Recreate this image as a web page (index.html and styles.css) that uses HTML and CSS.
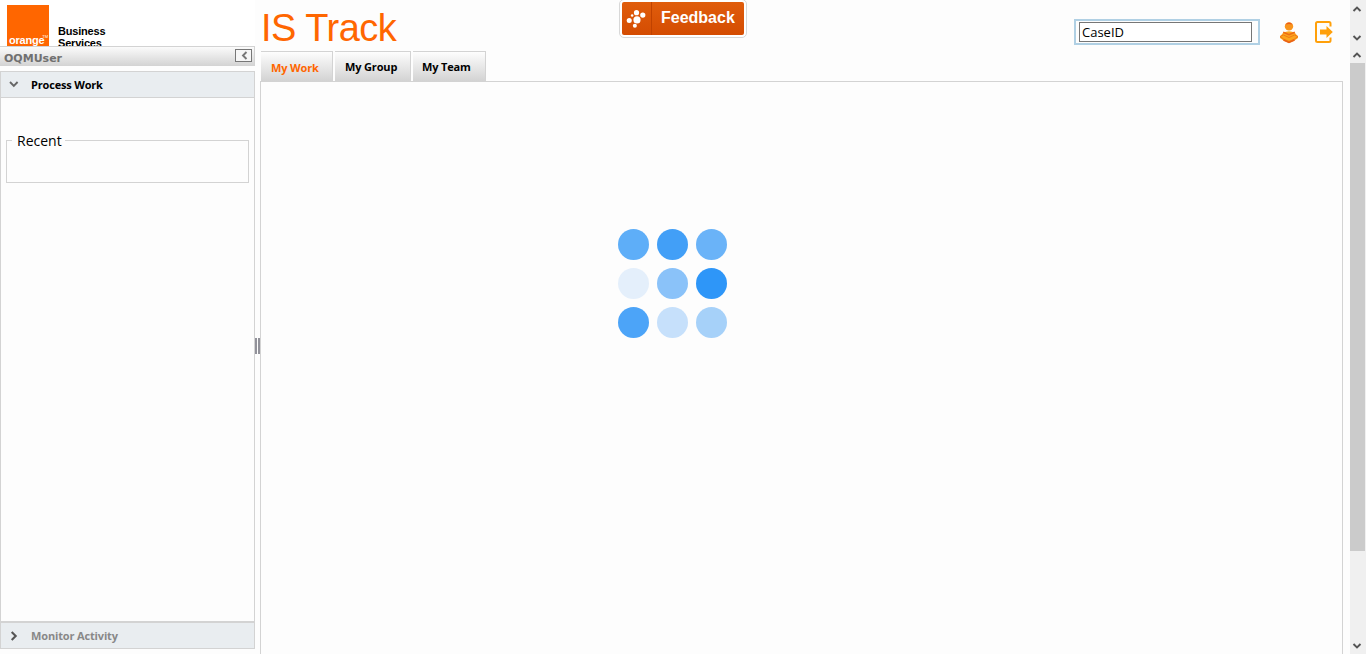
FILE: index.html
```html
<!DOCTYPE html>
<html lang="en">
<head>
<meta charset="utf-8">
<title>IS Track</title>
<link rel="stylesheet" href="styles.css">
</head>
<body>
<div class="app">
  <aside class="sidebar">
    <div class="brand">
      <div class="logo"><span class="logo-text">orange</span><span class="logo-tm">TM</span></div>
      <div class="brand-name">Business<br>Services</div>
    </div>
    <div class="user-bar">
      <span class="user-name">OQMUser</span>
      <button class="collapse" aria-label="Collapse"><svg width="15" height="11" viewBox="0 0 15 11"><path d="M10.500 2L7 5.500L10.500 9" fill="none" stroke="#777" stroke-width="1.900"/></svg></button>
    </div>
    <div class="accordion">
      <div class="acc-head">
        <svg class="chevron" width="10" height="10" viewBox="0 0 10 10"><path d="M1 2L4.800 5.800L8.600 2" fill="none" stroke="#666" stroke-width="1.900"/></svg>
        <span>Process Work</span>
      </div>
      <div class="acc-body">
        <fieldset class="recent"><legend>Recent</legend></fieldset>
      </div>
      <div class="acc-head acc-closed">
        <svg class="chevron" width="10" height="10" viewBox="0 0 10 10"><path d="M2.700 1L6.700 5L2.700 9" fill="none" stroke="#555" stroke-width="2.100"/></svg>
        <span>Monitor Activity</span>
      </div>
    </div>
  </aside>
  <div class="splitter"><i></i><i></i></div>
  <main class="main">
    <header class="header">
      <h1 class="title">IS Track</h1>
      <div class="search"><input class="search-input" type="text" value="CaseID"></div>
      <svg class="icon-user" width="20" height="22" viewBox="0 0 20 22">
        <circle cx="10" cy="4.400" r="4.200" fill="#f8951c"/>
        <path d="M6.300 2.600Q10 -1.500 13.700 2.600Q10 1.300 6.300 2.600Z" fill="#ea5a1c"/>
        <path d="M4 11Q10 7.500 16 11L19 14.500V16L15.500 18.500L10 21L4.500 18.500L1 16V14.500Z" fill="#fba51c"/>
        <path d="M4.200 10.200L10 12.800L15.800 10.200" fill="none" stroke="#ee6a16" stroke-width="1.500"/>
        <path d="M1 14.500L4.500 13L10 15.500L15.500 13L19 14.500L15.500 17L10 19.500L4.500 17Z" fill="#fba51c" stroke="#f07a18" stroke-width="1"/>
        <path d="M4.500 18L10 20.500L15.500 18" fill="none" stroke="#ea6217" stroke-width="1.500"/>
      </svg>
      <svg class="icon-exit" width="19" height="22" viewBox="0 0 19 22">
        <path d="M15.500 5.500V2.500Q15.500 1 14 1H2.500Q1 1 1 2.500V19.500Q1 21 2.500 21H14Q15.500 21 15.500 19.500V16.500" fill="none" stroke="#ffa00a" stroke-width="2"/>
        <path d="M5 8.500H11.500V5L17.800 11L11.500 17V13.500H5Z" fill="#ffa00a"/>
      </svg>
    </header>
    <nav class="tabs">
      <a class="tab tab-active">My Work</a>
      <a class="tab">My Group</a>
      <a class="tab">My Team</a>
    </nav>
    <section class="panel">
      <div class="loader">
        <i class="dot d1"></i><i class="dot d2"></i><i class="dot d3"></i>
        <i class="dot d4"></i><i class="dot d5"></i><i class="dot d6"></i>
        <i class="dot d7"></i><i class="dot d8"></i><i class="dot d9"></i>
      </div>
    </section>
  </main>
  <div class="scrollbar">
    <svg class="arrow" width="10" height="8" viewBox="0 0 10 8"><path d="M1.500 6L5 2.500L8.500 6" /></svg>
    <svg class="arrow arrow-down" width="10" height="8" viewBox="0 0 10 8"><path d="M1.500 2L5 5.500L8.500 2" /></svg>
    <svg class="arrow arrow-inner" width="10" height="8" viewBox="0 0 10 8"><path d="M1.500 6L5 2.500L8.500 6" /></svg>
    <div class="thumb"></div>
    <svg class="arrow arrow-end" width="10" height="8" viewBox="0 0 10 8"><path d="M1.500 2L5 5.500L8.500 2" /></svg>
  </div>
  <button class="feedback">
    <svg width="30" height="33" viewBox="0 0 30 33"><g fill="#fff"><circle cx="15.500" cy="18" r="3.700"/><circle cx="15" cy="10.500" r="2.700"/><circle cx="21.500" cy="13" r="2.700"/><circle cx="7.500" cy="18.500" r="2.600"/><circle cx="13.300" cy="24" r="2.100"/><circle cx="10.500" cy="13.500" r="1.300"/></g></svg>
    <span class="feedback-label">Feedback</span>
  </button>
</div>
</body>
</html>
```
FILE: styles.css
```css
* { box-sizing: border-box; }
body { margin: 0; background: #fdfdfd; font-family: "Open Sans", sans-serif; color: #000; overflow: hidden; }
.app { position: relative; display: flex; height: 654px; }
.sidebar { width: 255px; display: flex; flex-direction: column; flex: none; }
.brand { height: 46px; display: flex; padding: 5px 0 0 7px; overflow: hidden; background: #fff; }
.logo { position: relative; width: 42px; height: 42px; background: #ff6600; color: #fff; }
.logo-text { position: absolute; left: 2px; top: 28px; font: bold 11px/14px "Liberation Sans", sans-serif; letter-spacing: -0.2px; }
.logo-tm { position: absolute; right: 1px; top: 29px; font: 4px/5px "Liberation Sans", sans-serif; }
.brand-name { margin: 20px 0 0 9px; font: bold 11px/12px "Liberation Sans", sans-serif; letter-spacing: -0.2px; white-space: nowrap; }
.user-bar { height: 20px; display: flex; justify-content: space-between; border: 1px solid #d3d3d3; border-width: 1px 1px 0 0; background: linear-gradient(#fbfbfb, #d3d3d3); padding: 2px 2px 0 4px; }
.user-name { font: bold 11px/20px "DejaVu Sans", sans-serif; color: #707070; }
.collapse { width: 17px; height: 13px; padding: 0; border: 1px solid #777; background: #f6f6f6; display: flex; }
.accordion { margin-top: 5px; height: 578px; display: flex; flex-direction: column; border: 1px solid #d3d3d3; }
.acc-head { height: 26px; display: flex; align-items: center; padding-left: 8px; background: #e9edf0; border-bottom: 1px solid #d3d3d3; font-size: 11px; font-weight: 700; letter-spacing: -0.18px; flex: none; }
.chevron { margin-right: 12px; }
.acc-body { flex: 1; padding: 34px 5px 0; }
.recent { height: 51px; margin: 0; padding: 0 0 0 5px; border: 1px solid #d3d3d3; }
.recent legend { padding: 0 3px 0 5px; font-size: 14px; line-height: 17px; }
.acc-closed { height: 27px; border-top: 2px solid #d3d3d3; border-bottom: 0; color: #888; letter-spacing: -0.15px; }
.splitter { width: 5px; flex: none; display: flex; gap: 1px; padding: 338px 0 0; }
.splitter i { width: 2px; height: 16px; background: #92929a; }
.main { width: 1083px; flex: none; display: flex; flex-direction: column; }
.header { height: 51px; display: flex; flex: none; }
.title { margin: 7px 0 0; padding-left: 1px; width: 814px; font: 38px/42px "Liberation Sans", sans-serif; letter-spacing: -0.5px; color: #ff6600; }
.search { width: 186px; height: 26px; margin-top: 19px; border: 2px solid #b0d0e4; padding: 1px 0 0 3px; display: flex; }
.search-input { width: 173px; height: 20px; border: 1px solid #767676; padding: 0 2px; font: 13px "Open Sans", sans-serif; background: #fff; outline: 0; }
.icon-user { margin: 22px 0 0 19px; }
.icon-exit { margin: 21px 0 0 16px; }
.tabs { height: 30px; display: flex; gap: 2px; flex: none; padding-left: 1px; }
.tab { height: 30px; padding: 7px 0 0 10px; width: 76px; border: 1px solid #d3d3d3; border-width: 1px 1px 0 0; background: linear-gradient(#fdfdfd, #d3d3d3); font-size: 11px; line-height: 15px; font-weight: 700; letter-spacing: -0.15px; }
.tab:last-child { width: 73px; padding-left: 9px; }
.tab-active { width: 72px; color: #ff6600; padding-top: 8px; }
.panel { flex: 1; border: 1px solid #d3d3d3; border-bottom: 0; padding: 147px 0 0 357px; }
.loader { display: grid; grid-template-columns: repeat(3, 31px); gap: 8px; }
.dot { width: 31px; height: 31px; border-radius: 50%; }
.d1 { background: #5eaef8; } .d2 { background: #429ff7; } .d3 { background: #6ab3f8; }
.d4 { background: #e4effb; } .d5 { background: #8ac2f9; } .d6 { background: #2e96f8; }
.d7 { background: #4ca4f8; } .d8 { background: #c6e0fb; } .d9 { background: #a6d1f9; }
.scrollbar { width: 16px; margin-left: auto; background: #f0f0f0; display: flex; flex-direction: column; padding-top: 5px; }
.arrow { margin-left: 2px; flex: none; fill: none; stroke: #555; stroke-width: 1.900; }
.arrow-down { margin-top: 21px; }
.arrow-inner { margin-top: 9px; }
.thumb { width: 15px; height: 488px; margin-top: 4px; background: #cbcbcb; flex: none; }
.arrow-end { margin-top: 91px; }
.feedback { position: absolute; left: 619px; top: -1px; width: 128px; height: 39px; padding: 2px; display: flex; border: 1px solid #d8d8d8; border-radius: 5px; background: linear-gradient(#e05d0c, #d44c02) content-box, #fff; overflow: hidden; color: #fff; }
.feedback svg { flex: none; border-right: 1px solid #c04200; }
.feedback-label { padding-left: 9px; font: bold 16px/31px "Liberation Sans", sans-serif; }
```
